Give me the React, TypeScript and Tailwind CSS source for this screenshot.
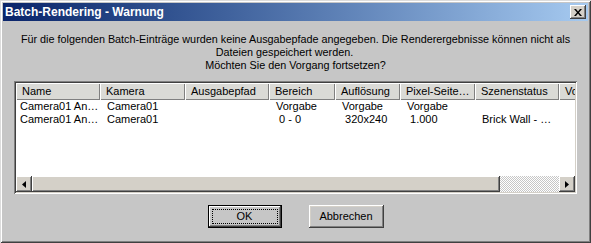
import React from 'react';

const raised =
  'shadow-[inset_-1px_-1px_#404040,inset_1px_1px_#ffffff,inset_-2px_-2px_#808080,inset_2px_2px_#d4d0c8]';

const columns = [
  { label: 'Name', w: 'w-[84px]' },
  { label: 'Kamera', w: 'w-[85px]' },
  { label: 'Ausgabepfad', w: 'w-[84px]' },
  { label: 'Bereich', w: 'w-[66px]' },
  { label: 'Auflösung', w: 'w-[65px]' },
  { label: 'Pixel-Seite…', w: 'w-[75px]' },
  { label: 'Szenenstatus', w: 'w-[84px]' },
  { label: 'Vorschau', w: 'w-[40px]' },
];

const rows = [
  ['Camera01 An…', 'Camera01', '', 'Vorgabe', 'Vorgabe', 'Vorgabe', '', ''],
  ['Camera01 An…', 'Camera01', '', ' 0 - 0', ' 320x240', ' 1.000', 'Brick Wall - …', ''],
];

function Arrow({ dir }: { dir: 'left' | 'right' }) {
  return (
    <div className={`w-[16px] h-[16px] bg-[#d4d0c8] flex items-center justify-center shrink-0 ${raised}`}>
      <svg width="4" height="7" viewBox="0 0 4 7">
        {dir === 'left' ? <path d="M4 0V7L0 3.5Z" fill="#000" /> : <path d="M0 0V7L4 3.5Z" fill="#000" />}
      </svg>
    </div>
  );
}

export default function App() {
  return (
    <div className="w-[591px] h-[243px] bg-[#c6c6c6] p-[3px] flex flex-col font-['Liberation_Sans',sans-serif] text-[11px] text-black shadow-[inset_1px_1px_#dcdcdc,inset_-1px_-1px_#404040,inset_2px_2px_#ffffff,inset_-2px_-2px_#808080] overflow-hidden">
      {/* title bar */}
      <div className="h-[18px] flex items-center bg-gradient-to-r from-[#0a246a] to-[#a6caf0] pl-[2px] pr-[2px] shrink-0">
        <span className="flex-1 text-white font-bold text-[12px]">Batch-Rendering - Warnung</span>
        <div className={`w-[16px] h-[14px] bg-[#d4d0c8] flex items-center justify-center ${raised}`}>
          <svg width="8" height="7" viewBox="0 0 8 7">
            <path d="M0 0h2l2 2.5L6 0h2L5 3.5 8 7H6L4 4.5 2 7H0l3-3.5Z" fill="#000" />
          </svg>
        </div>
      </div>

      {/* message */}
      <div className="mt-[12px] flex flex-col items-center leading-[13px] text-[10.8px]">
        <div>Für die folgenden Batch-Einträge wurden keine Ausgabepfade angegeben. Die Renderergebnisse können nicht als</div>
        <div className="pr-[22px]">Dateien gespeichert werden.</div>
        <div>Möchten Sie den Vorgang fortsetzen?</div>
      </div>

      {/* list view */}
      <div className="mt-[9px] mx-[11px] h-[113px] p-[2px] bg-white flex flex-col shadow-[inset_1px_1px_#808080,inset_-1px_-1px_#ffffff,inset_2px_2px_#404040,inset_-2px_-2px_#d4d0c8]">
        <div className="flex-1 overflow-hidden flex flex-col">
          <div className="flex h-[17px] shrink-0">
            {columns.map((c) => (
              <div
                key={c.label}
                className={`${c.w} shrink-0 h-full pl-[6px] flex items-center whitespace-nowrap overflow-hidden bg-[#dadad6] shadow-[inset_1px_1px_#ffffff,inset_-1px_-1px_#808080]`}
              >
                {c.label}
              </div>
            ))}
          </div>
          {rows.map((r, i) => (
            <div key={i} className="flex h-[13px] leading-[13px] items-center">
              {r.map((cell, j) => (
                <div
                  key={j}
                  className={`${columns[j].w} shrink-0 whitespace-pre overflow-hidden ${j === 0 ? 'pl-[4px]' : 'pl-[7px]'}`}
                >
                  {cell}
                </div>
              ))}
            </div>
          ))}
        </div>

        {/* horizontal scrollbar */}
        <div className="h-[16px] flex shrink-0">
          <Arrow dir="left" />
          <div className="w-[468px] h-full bg-[#d4d0c8] shrink-0 shadow-[inset_-1px_-1px_#404040,inset_1px_1px_#ffffff,inset_-2px_-2px_#808080]" />
          <div className="flex-1 h-full bg-[repeating-conic-gradient(#ffffff_0_25%,#c6c6c6_0_50%)] bg-[length:2px_2px]" />
          <Arrow dir="right" />
        </div>
      </div>

      {/* buttons */}
      <div className="mt-[11px] flex justify-center gap-[27px]">
        <button className="w-[74px] h-[23px] bg-[#c6c6c6] border border-black p-[3px] shadow-[inset_-1px_-1px_#404040,inset_1px_1px_#ffffff,inset_-2px_-2px_#808080]">
          <div className="w-full h-full border border-dotted border-black flex items-center justify-center">OK</div>
        </button>
        <button className={`w-[75px] h-[23px] bg-[#c6c6c6] flex items-center justify-center ${raised}`}>Abbrechen</button>
      </div>
    </div>
  );
}
